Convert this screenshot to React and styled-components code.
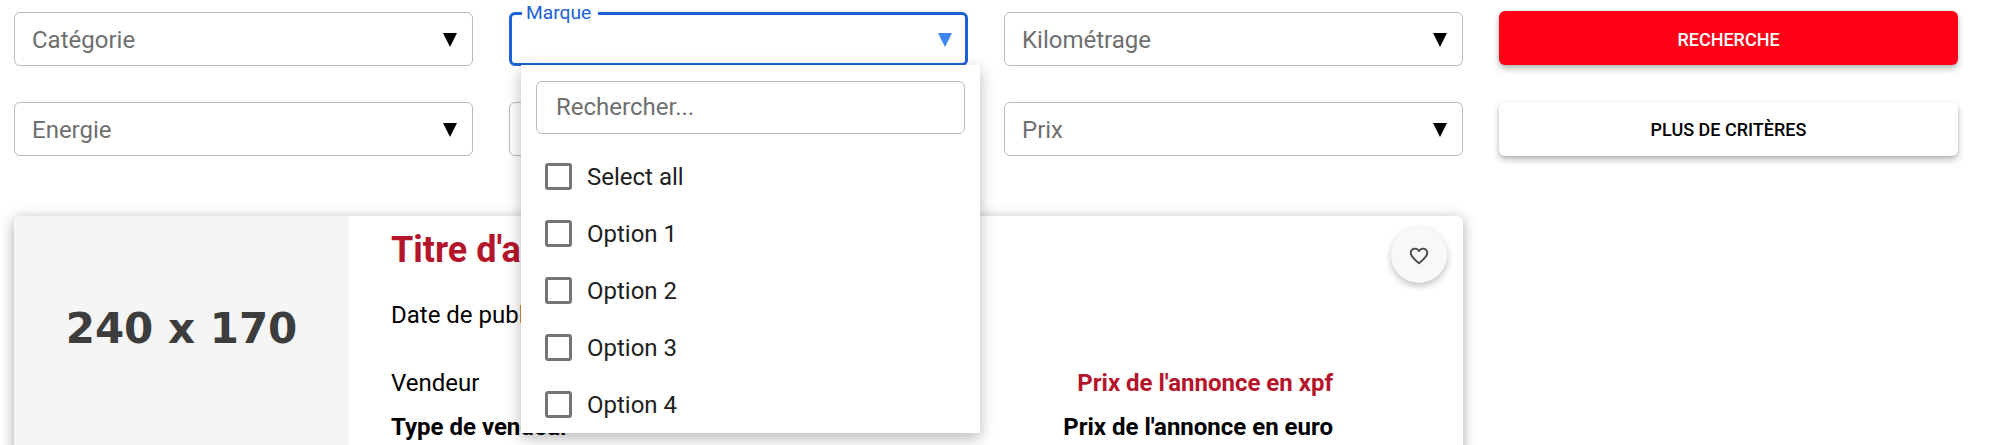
import React from 'react';
import styled, { createGlobalStyle } from 'styled-components';

const GlobalStyle = createGlobalStyle`
  html, body {
    margin: 0;
    padding: 0;
    background: #fff;
    font-family: Roboto, "Liberation Sans", sans-serif;
    overflow: hidden;
  }
`;

const Page = styled.div`
  height: 445px;
  overflow: hidden;
  padding: 12px 0 0 14px;
  box-sizing: border-box;
`;

const FilterGrid = styled.div`
  display: grid;
  grid-template-columns: repeat(4, 459px);
  grid-auto-rows: 54px;
  column-gap: 36px;
  row-gap: 36px;
`;

const SelectWrap = styled.div`
  position: relative;
`;

const SelectBox = styled.div`
  height: 54px;
  box-sizing: border-box;
  display: flex;
  align-items: center;
  justify-content: space-between;
  padding: 1px ${(p) => (p.$open ? '13px' : '15px')} 0 ${(p) => (p.$open ? '16px' : '17px')};
  border: ${(p) => (p.$open ? '3px solid #1a62d6' : '1px solid #b9b9b9')};
  border-radius: 6px;
  background: #fff;
  font-size: 24px;
  color: #6f6f6f;
`;

const Arrow = styled.span`
  width: 0;
  height: 0;
  border-left: 7px solid transparent;
  border-right: 7px solid transparent;
  border-top: 14px solid ${(p) => p.$color};
`;

const FloatingLabel = styled.span`
  position: absolute;
  top: -8px;
  left: 13px;
  padding: 0 7px 0 4px;
  background: #fff;
  font-size: 19.2px;
  line-height: 18px;
  color: #1a62d6;
`;

const ActionButton = styled.button`
  height: 54px;
  margin-top: ${(p) => (p.$primary ? '-1px' : '0')};
  padding: ${(p) => (p.$primary ? '2px 0 0' : '0')};
  border: none;
  border-radius: 6px;
  background: ${(p) => (p.$primary ? '#ff0016' : '#fff')};
  color: ${(p) => (p.$primary ? '#fff' : '#000')};
  font-family: inherit;
  font-size: 18px;
  font-weight: 500;
  box-shadow: 0 4px 7px rgba(0, 0, 0, 0.24), 0 1px 3px rgba(0, 0, 0, 0.12);
`;

const Dropdown = styled.div`
  position: absolute;
  z-index: 5;
  top: 53px;
  left: 12px;
  width: 459px;
  height: 368px;
  box-sizing: border-box;
  padding: 16px 15px 0;
  background: #fff;
  box-shadow: 0 5px 14px rgba(0, 0, 0, 0.28);
`;

const SearchInput = styled.input`
  display: block;
  width: 429px;
  height: 53px;
  box-sizing: border-box;
  padding: 0 19px 2px;
  border: 1px solid #b9b9b9;
  border-radius: 6px;
  font-family: inherit;
  font-size: 24px;
  &::placeholder {
    color: #6f6f6f;
    opacity: 1;
  }
`;

const OptionList = styled.div`
  display: flex;
  flex-direction: column;
  margin-top: 14px;
`;

const OptionRow = styled.label`
  height: 57px;
  display: flex;
  align-items: center;
  gap: 15px;
  padding-left: 9px;
  font-size: 24px;
  color: #212121;
`;

const Check = styled.input`
  appearance: none;
  width: 27px;
  height: 27px;
  margin: 0;
  box-sizing: border-box;
  border: 3px solid #757575;
  border-radius: 3px;
  background: #fff;
`;

const Card = styled.div`
  position: relative;
  display: flex;
  width: 1449px;
  height: 300px;
  margin-top: 60px;
  border-radius: 6px;
  background: #fff;
  box-shadow: 0 3px 14px rgba(0, 0, 0, 0.34);
`;

const Thumb = styled.div`
  flex: 0 0 335px;
  box-sizing: border-box;
  padding-top: 87px;
  background: #f5f5f5;
  border-radius: 6px 0 0 6px;
  text-align: center;
  font-family: "DejaVu Sans", sans-serif;
  font-weight: 700;
  font-size: 42px;
  line-height: 52px;
  color: #3d3d3d;
`;

const CardBody = styled.div`
  flex: 1;
  padding: 14px 130px 0 42px;
  color: #000;
`;

const Title = styled.h2`
  margin: 0;
  font-size: 36px;
  line-height: 40px;
  font-weight: 700;
  color: #b5152b;
`;

const DateLine = styled.div`
  margin-top: 31px;
  font-size: 24px;
  line-height: 28px;
`;

const InfoRow = styled.div`
  display: flex;
  justify-content: space-between;
  margin-top: ${(p) => p.$gap}px;
  font-size: 24px;
  line-height: 28px;
`;

const Strong = styled.span`
  font-weight: 700;
`;

const Price = styled.span`
  font-weight: 700;
  color: ${(p) => p.$color};
`;

const FavButton = styled.button`
  position: absolute;
  top: 11px;
  right: 16px;
  width: 56px;
  height: 56px;
  display: flex;
  align-items: center;
  justify-content: center;
  padding: 2px 0 0;
  border: none;
  border-radius: 50%;
  background: #f8f8f8;
  box-shadow: 0 3px 7px rgba(0, 0, 0, 0.25);
`;

const options = ['Select all', 'Option 1', 'Option 2', 'Option 3', 'Option 4'];

const Select = ({ label }) => (
  <SelectBox>
    <span>{label}</span>
    <Arrow $color="#000" />
  </SelectBox>
);

const App = () => {
  return (
    <Page>
      <GlobalStyle />
      <FilterGrid>
        <Select label="Catégorie" />
        <SelectWrap>
          <SelectBox $open>
            <span />
            <Arrow $color="#4285f4" />
          </SelectBox>
          <FloatingLabel>Marque</FloatingLabel>
          <Dropdown>
            <SearchInput type="text" placeholder="Rechercher..." />
            <OptionList>
              {options.map((o) => (
                <OptionRow key={o}>
                  <Check type="checkbox" />
                  {o}
                </OptionRow>
              ))}
            </OptionList>
          </Dropdown>
        </SelectWrap>
        <Select label="Kilométrage" />
        <ActionButton $primary>RECHERCHE</ActionButton>
        <Select label="Energie" />
        {/* this one sits behind the open menu, only its left edge shows */}
        <Select label="" />
        <Select label="Prix" />
        <ActionButton>PLUS DE CRITÈRES</ActionButton>
      </FilterGrid>
      <Card>
        <Thumb>240 x 170</Thumb>
        <CardBody>
          <Title>Titre d'annonce</Title>
          <DateLine>Date de publication</DateLine>
          <InfoRow $gap={40}>
            <span>Vendeur</span>
            <Price $color="#b5152b">Prix de l'annonce en xpf</Price>
          </InfoRow>
          <InfoRow $gap={16}>
            <Strong>Type de vendeur</Strong>
            <Price $color="#000">Prix de l'annonce en euro</Price>
          </InfoRow>
        </CardBody>
        <FavButton aria-label="Favori">
          <svg width="22" height="22" viewBox="0 0 24 24" fill="#444">
            <path d="M16.5 3c-1.74 0-3.41.81-4.5 2.09C10.91 3.81 9.24 3 7.5 3 4.42 3 2 5.42 2 8.5c0 3.78 3.4 6.86 8.55 11.54L12 21.35l1.45-1.32C18.6 15.36 22 12.28 22 8.5 22 5.42 19.58 3 16.5 3zm-4.4 15.55l-.1.1-.1-.1C7.14 14.24 4 11.39 4 8.5 4 6.5 5.5 5 7.5 5c1.54 0 3.04.99 3.57 2.36h1.87C13.46 5.99 14.96 5 16.5 5c2 0 3.5 1.5 3.5 3.5 0 2.89-3.14 5.74-7.9 10.05z" />
          </svg>
        </FavButton>
      </Card>
    </Page>
  );
};

export default App;
